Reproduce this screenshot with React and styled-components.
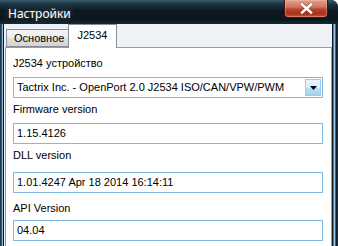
import styled, { createGlobalStyle } from "styled-components";

const GlobalStyle = createGlobalStyle`
  html, body {
    margin: 0;
    padding: 0;
    background: #ffffff;
  }
  * {
    box-sizing: border-box;
  }
`;

const Window = styled.div`
  width: 338px;
  height: 246px;
  display: flex;
  flex-direction: column;
  overflow: hidden;
  background: #10202a;
  border-top-right-radius: 7px;
  font-family: "Liberation Sans", Arial, sans-serif;
  font-size: 11px;
  color: #000;
`;

const TitleBar = styled.div`
  height: 24px;
  flex: none;
  display: flex;
  justify-content: space-between;
  align-items: flex-start;
  padding: 0 10px 0 8px;
  background: linear-gradient(
    to bottom,
    #3a5a6c 0%,
    #1a3442 18%,
    #0c1a22 45%,
    #0a161e 80%,
    #132a36 100%
  );
`;

const Title = styled.span`
  margin-top: 6px;
  font-family: "Noto Sans", "DejaVu Sans", sans-serif;
  font-size: 12px;
  line-height: 16px;
  color: #ffffff;
  text-shadow: 0 0 6px rgba(255, 255, 255, 0.35);
`;

const CloseButton = styled.div`
  width: 44px;
  height: 18px;
  display: flex;
  align-items: center;
  justify-content: center;
  border: 1px solid #4a1208;
  border-top: none;
  border-radius: 0 0 4px 4px;
  background: linear-gradient(
    to bottom,
    #e3a08f 0%,
    #d27760 40%,
    #c0432a 55%,
    #a8301c 80%,
    #c85a3c 100%
  );
  box-shadow: inset 0 0 0 1px rgba(255, 200, 180, 0.35);
`;

const Body = styled.div`
  flex: 1;
  display: flex;
  min-height: 0;
`;

const Edge = styled.div`
  flex: none;
  width: ${(p) => p.$width}px;
  background: ${(p) => p.$bg};
`;

const Client = styled.div`
  flex: 1;
  display: flex;
  flex-direction: column;
  background: #eef2f7;
  min-width: 0;
`;

const TabStrip = styled.div`
  height: 23px;
  flex: none;
  display: flex;
  align-items: flex-end;
  padding-left: 2px;
  position: relative;
  z-index: 1;
`;

const Tab = styled.div`
  height: ${(p) => (p.$active ? 24 : 18)}px;
  padding: ${(p) => (p.$active ? "3px 9px 0 8px" : "0 4px 0 7px")};
  margin-bottom: ${(p) => (p.$active ? -1 : 0)}px;
  display: flex;
  align-items: ${(p) => (p.$active ? "flex-start" : "center")};
  border: 1px solid #898c95;
  border-bottom: ${(p) => (p.$active ? "none" : "1px solid #898c95")};
  border-right: ${(p) => (p.$active ? "1px solid #898c95" : "none")};
  background: ${(p) =>
    p.$active
      ? "#ffffff"
      : "linear-gradient(to bottom, #f4f4f4 0%, #ececec 50%, #e0e0e0 51%, #d4d4d4 100%)"};
  line-height: 14px;
  white-space: nowrap;
`;

const Panel = styled.div`
  flex: 1;
  display: flex;
  flex-direction: column;
  margin-left: 1px;
  padding: 0 8px 0 7px;
  background: #ffffff;
  border: 1px solid #8c9fb5;
  border-bottom: none;
`;

const Label = styled.div`
  margin-top: ${(p) => p.$gap}px;
  height: 14px;
  line-height: 14px;
  white-space: nowrap;
`;

const Box = styled.div`
  margin-top: ${(p) => p.$gap}px;
  width: 310px;
  height: 21px;
  flex: none;
  display: flex;
  align-items: center;
  border: 1px solid #82b9e4;
  padding-left: 3px;
  line-height: 19px;
  white-space: nowrap;
`;

const BoxText = styled.span`
  flex: 1;
  overflow: hidden;
`;

const DropButton = styled.div`
  width: 16px;
  height: 17px;
  margin-right: 1px;
  display: flex;
  align-items: center;
  justify-content: center;
  border: 1px solid #9ccaf0;
  background: linear-gradient(to bottom, #eaf5fd 0%, #d9eefb 50%, #bedff6 51%, #a8d3f2 100%);
`;

function Field({ label, value, labelGap, boxGap }) {
  return (
    <>
      <Label $gap={labelGap}>{label}</Label>
      <Box $gap={boxGap}>
        <BoxText>{value}</BoxText>
      </Box>
    </>
  );
}

export default function App() {
  return (
    <>
      <GlobalStyle />
      <Window>
        <TitleBar>
          <Title>Настройки</Title>
          <CloseButton>
            <svg width="13" height="11" viewBox="0 0 13 11">
              <path
                d="M2 1.5 L11 9.5 M11 1.5 L2 9.5"
                stroke="#3a0a02"
                strokeWidth="3.6"
                strokeLinecap="square"
                opacity="0.5"
              />
              <path
                d="M2 1.5 L11 9.5 M11 1.5 L2 9.5"
                stroke="#ffffff"
                strokeWidth="2.6"
                strokeLinecap="square"
              />
            </svg>
          </CloseButton>
        </TitleBar>
        <Body>
          <Edge
            $width={4}
            $bg="linear-gradient(to right, #1e3a4c 0 1px, #2f5a76 1px 2px, #8fb8d8 2px 3px, #0e1a22 3px 4px)"
          />
          <Client>
            <TabStrip>
              <Tab>Основное</Tab>
              <Tab $active>J2534</Tab>
            </TabStrip>
            <Panel>
              <Label $gap={8}>J2534 устройство</Label>
              <Box $gap={7}>
                <BoxText>Tactrix Inc. - OpenPort 2.0 J2534 ISO/CAN/VPW/PWM</BoxText>
                <DropButton>
                  <svg width="7" height="4" viewBox="0 0 7 4">
                    <path d="M0 0 H7 L3.5 4 Z" fill="#000" />
                  </svg>
                </DropButton>
              </Box>
              <Field label="Firmware version" value="1.15.4126" labelGap={4} boxGap={7} />
              <Field
                label="DLL version"
                value="1.01.4247 Apr 18 2014 16:14:11"
                labelGap={4}
                boxGap={10}
              />
              <Field label="API Version" value="04.04" labelGap={8} boxGap={5} />
            </Panel>
          </Client>
          <Edge
            $width={6}
            $bg="linear-gradient(to right, #0e1a22 0 1px, #4d7fa3 1px 2px, #9cc4e2 2px 3px, #3d6a8c 3px 4px, #0e1a22 4px 5px, #1c3646 5px 6px)"
          />
        </Body>
      </Window>
    </>
  );
}
